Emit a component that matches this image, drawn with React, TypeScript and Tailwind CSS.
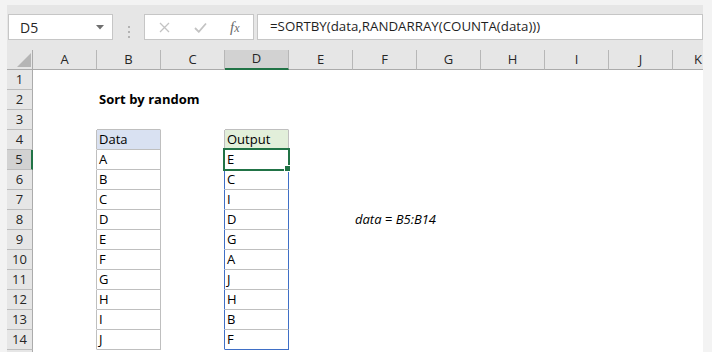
import React from "react";

const COLS = ["A", "B", "C", "D", "E", "F", "G", "H", "I", "J", "K"];

const dataCol = ["A", "B", "C", "D", "E", "F", "G", "H", "I", "J"];
const outCol = ["E", "C", "I", "D", "G", "A", "J", "H", "B", "F"];

const cellFont = { fontFamily: '"Open Sans", "Liberation Sans", sans-serif' };

// picks the border + fill classes of one sheet cell
function cellClass(row: number, col: string) {
  const inTable = row >= 4 && row <= 14;
  const inSpill = row >= 5 && row <= 14;

  let right = "border-r-white";
  let bottom = "border-b-white";
  let bg = "bg-white";

  if (col === "A" && inTable) right = "border-r-[#bfbfbf]";
  if (col === "B") {
    if (inTable) {
      right = "border-r-[#bfbfbf]";
      bottom = "border-b-[#bfbfbf]";
    }
    if (row === 3) bottom = "border-b-[#bfbfbf]";
    if (row === 4) bg = "bg-[#d9e1f2]";
  }
  if (col === "C") {
    if (row === 4) right = "border-r-[#bfbfbf]";
    if (inSpill) right = "border-r-[#3f6fc6]";
  }
  if (col === "D") {
    if (row === 3) bottom = "border-b-[#bfbfbf]";
    if (row === 4) {
      right = "border-r-[#bfbfbf]";
      bottom = "border-b-[#bfbfbf]";
      bg = "bg-[#e2efda]";
    }
    if (inSpill) {
      right = "border-r-[#3f6fc6]";
      bottom = row === 14 ? "border-b-[#3f6fc6]" : "border-b-[#bfbfbf]";
    }
  }
  return `${right} ${bottom} ${bg}`;
}

function cellText(row: number, col: string): React.ReactNode {
  if (row === 2 && col === "B") return <span className="font-bold">Sort by random</span>;
  if (row === 4 && col === "B") return "Data";
  if (row === 4 && col === "D") return "Output";
  if (row >= 5 && row <= 14 && col === "B") return dataCol[row - 5];
  if (row >= 5 && row <= 14 && col === "D") return outCol[row - 5];
  if (row === 8 && col === "F") return <span className="italic">data = B5:B14</span>;
  return null;
}

const Toolbar = () => (
  <div className="flex h-[45px] bg-[#e6e6e6] pt-[9px] pl-[1px]">
    {/* Name box */}
    <div className="flex h-[26px] w-[105px] items-center justify-between border border-[#c6c6c6] bg-white pl-[11px] pr-[8px]">
      <span className="text-[14px] text-[#262626]" style={cellFont}>D5</span>
      <svg width="8" height="5" viewBox="0 0 8 5">
        <path d="M0 0 L8 0 L4 4.5 Z" fill="#6f6f6f" />
      </svg>
    </div>
    {/* grip */}
    <div className="flex w-[31px] flex-col items-center justify-center gap-[3px]">
      <div className="h-[2px] w-[2px] bg-[#b3b3b3]" />
      <div className="h-[2px] w-[2px] bg-[#b3b3b3]" />
      <div className="h-[2px] w-[2px] bg-[#b3b3b3]" />
    </div>
    {/* cancel / enter / fx */}
    <div className="flex h-[26px] w-[110px] items-center border border-[#c6c6c6] bg-white">
      <svg className="ml-[14px]" width="11" height="11" viewBox="0 0 11 11">
        <path d="M1 1 L10 10 M10 1 L1 10" stroke="#c3c3c3" strokeWidth="1.3" />
      </svg>
      <svg className="ml-[24px]" width="13" height="11" viewBox="0 0 13 11">
        <path d="M1 6 L4.8 9.8 L12 1.5" stroke="#c3c3c3" strokeWidth="1.8" fill="none" />
      </svg>
      <span
        className="ml-[23px] text-[15px] italic leading-none text-[#6a6a6a]"
        style={{ fontFamily: '"Liberation Serif", serif' }}
      >
        f<span className="text-[12px]">x</span>
      </span>
    </div>
    {/* formula */}
    <div className="ml-[3px] flex h-[26px] flex-1 items-center border border-[#c6c6c6] bg-white pl-[12px]">
      <span className="text-[13.3px] text-[#1f1f1f]" style={cellFont}>
        =SORTBY(data,RANDARRAY(COUNTA(data)))
      </span>
    </div>
  </div>
);

const HeaderRow = () => (
  <div className="flex h-[20px] bg-[#e6e6e6]">
    <div className="relative w-[26px] border-r border-b border-[#ababab]">
      <svg className="absolute right-[1px] bottom-[2px]" width="14" height="14" viewBox="0 0 14 14">
        <path d="M14 0 L14 14 L0 14 Z" fill="#b5b5b5" />
      </svg>
    </div>
    {COLS.map((c) => {
      const sel = c === "D";
      return (
        <div
          key={c}
          className={
            sel
              ? "flex w-[64px] items-center justify-center border-r border-r-[#b7b7b7] border-b-2 border-b-[#217346] bg-[#d2d2d2] text-[13px] text-[#262626]"
              : c === "K"
                ? "flex w-[30px] items-center justify-end border-b border-b-[#ababab] pr-[1px] text-[13px] text-[#262626]"
                : "flex w-[64px] items-center justify-center border-r border-r-[#b7b7b7] border-b border-b-[#ababab] text-[13px] text-[#262626]"
          }
          style={cellFont}
        >
          {c}
        </div>
      );
    })}
  </div>
);

const SheetRow = ({ row }: { row: number }) => (
  <div className="flex h-[20px]">
    <div
      className={
        row === 5
          ? "flex w-[26px] items-center justify-center border-r-2 border-r-[#217346] border-b border-b-[#bdbdbd] bg-[#d2d2d2] text-[13px] text-[#262626]"
          : "flex w-[26px] items-center justify-center border-r border-r-[#ababab] border-b border-b-[#bdbdbd] bg-[#e6e6e6] text-[13px] text-[#262626]"
      }
      style={cellFont}
    >
      {row <= 14 ? row : ""}
    </div>
    {COLS.map((c) => {
      const text = cellText(row, c);
      return (
        <div
          key={c}
          className={`relative ${c === "K" ? "w-[30px]" : "w-[64px]"} whitespace-nowrap border-r border-b px-[2px] text-[13px] leading-[19px] text-black ${cellClass(row, c)}`}
          style={cellFont}
        >
          {text && <span className="relative z-[1]">{text}</span>}
          {row === 5 && c === "D" && (
            <div className="absolute -left-[2px] -top-[2px] z-10 h-[23px] w-[67px] border-2 border-[#217346]">
              <div className="absolute left-[59px] top-[15px] h-[7px] w-[7px] border border-white bg-[#217346]" />
            </div>
          )}
        </div>
      );
    })}
  </div>
);

const App = () => {
  const rows = Array.from({ length: 15 }, (_, i) => i + 1);
  return (
    <div className="h-[352px] w-[712px] overflow-hidden bg-[#f3f3f3] pt-[5px] pl-[7px] pr-[9px]">
      <Toolbar />
      <HeaderRow />
      {rows.map((r) => (
        <SheetRow key={r} row={r} />
      ))}
    </div>
  );
};

export default App;
